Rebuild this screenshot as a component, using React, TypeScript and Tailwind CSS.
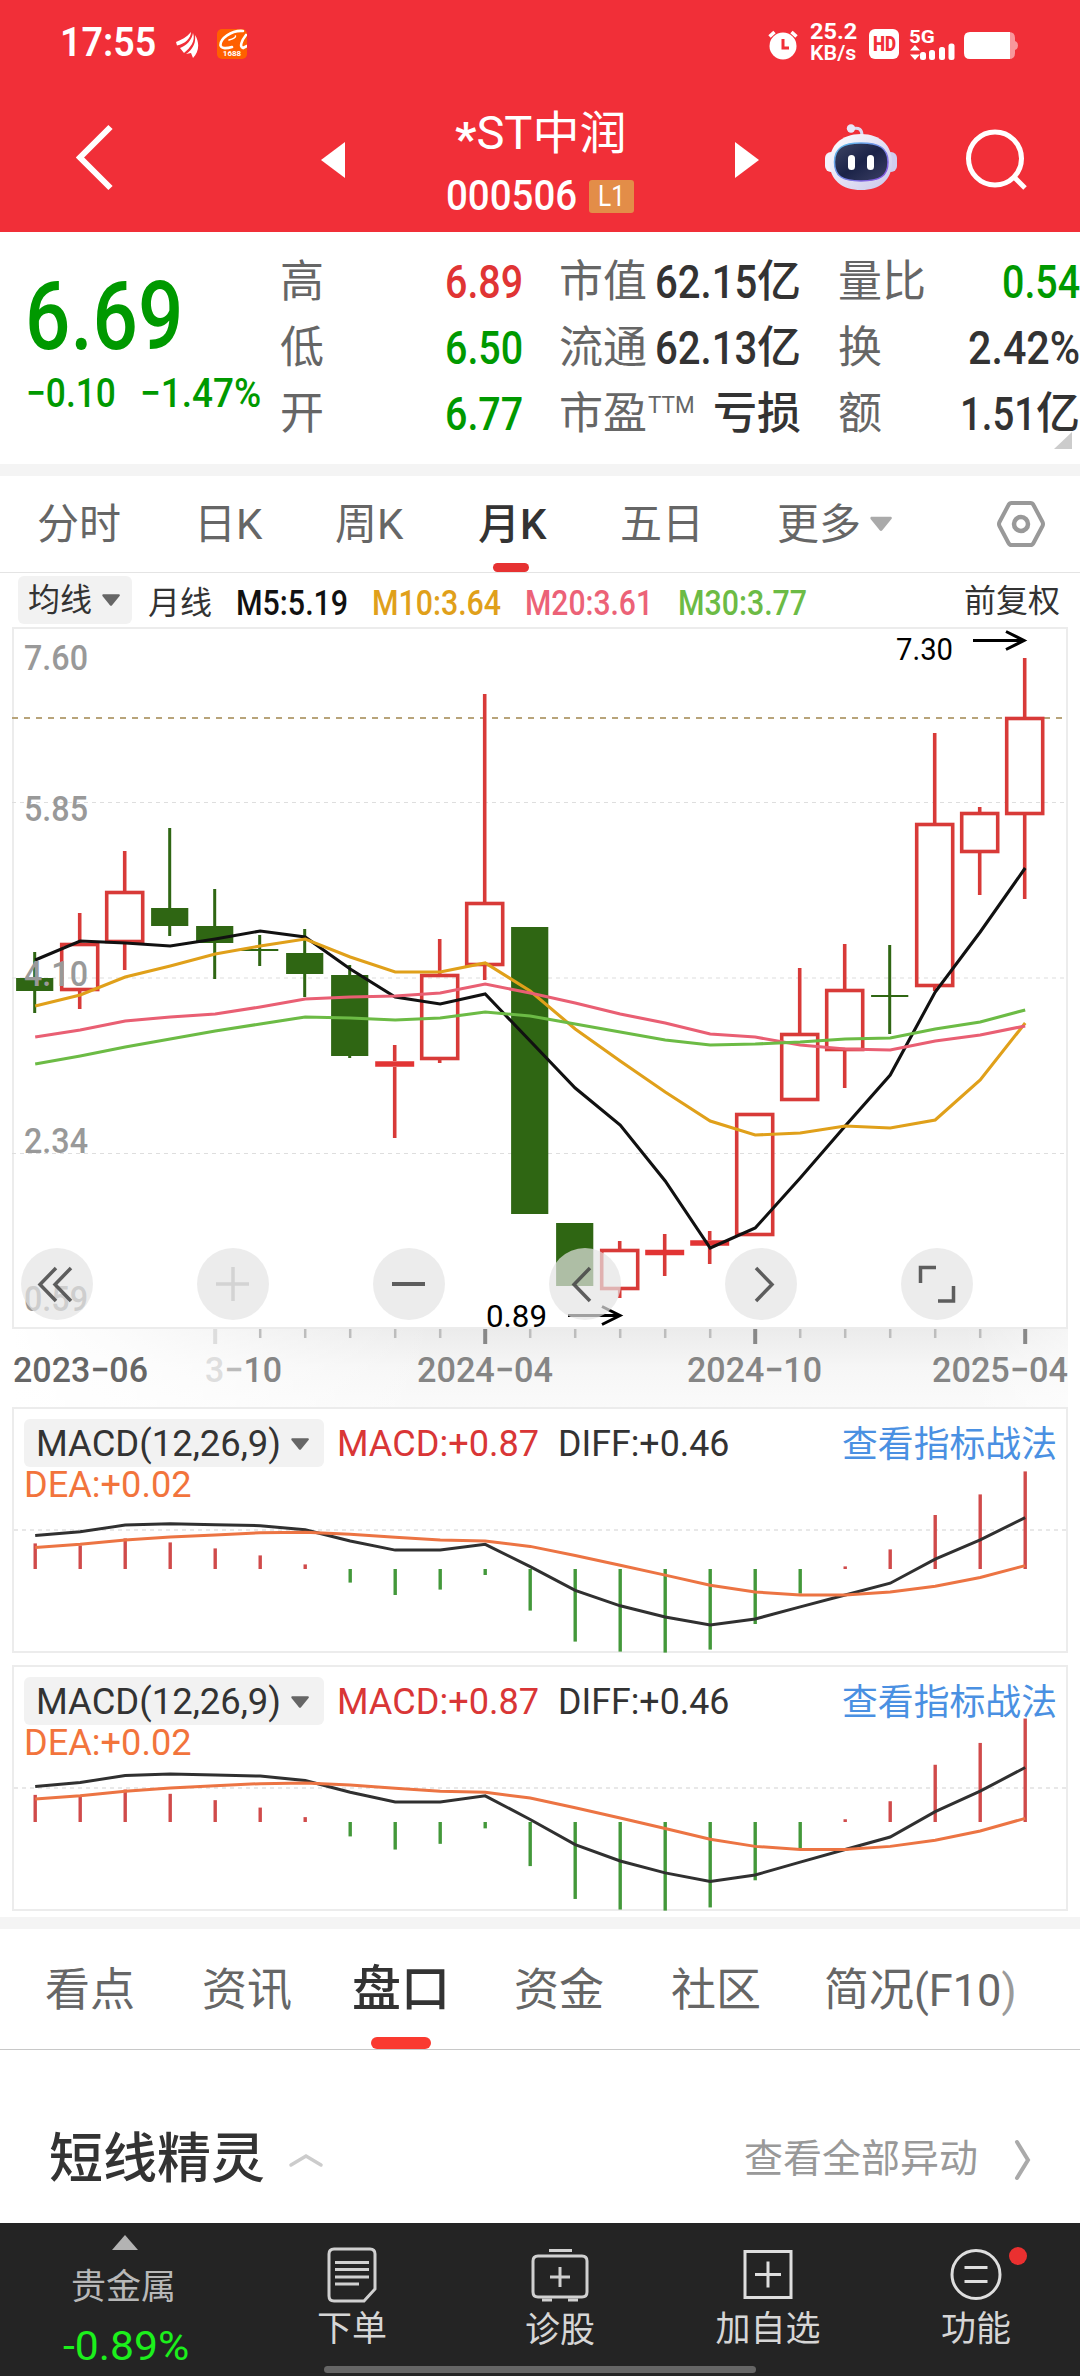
import { useLayoutEffect, useRef, useState, type ReactNode } from "react";

const CHART_X = 34.7;
const STEP = 45;

const px = (i: number) => CHART_X + i * STEP;

// up/down, high, body top, body bottom, low (chart pixels)
const candles: [string, number, number, number, number][] = [
  ["down", 952, 978, 991, 1013],
  ["up", 913, 943, 991, 1009],
  ["up", 851, 891, 943, 970],
  ["down", 828, 908, 926, 936],
  ["down", 889, 926, 943, 979],
  ["down", 935, 949, 951, 966],
  ["down", 929, 953, 974, 997],
  ["down", 965, 975, 1056, 1058],
  ["up", 1045, 1061, 1067, 1138],
  ["up", 939, 974, 1060, 1063],
  ["up", 694, 902, 966, 980],
  ["down", 927, 927, 1214, 1214],
  ["down", 1223, 1223, 1286, 1286],
  ["up", 1241, 1249, 1290, 1298],
  ["up", 1234, 1250, 1255, 1276],
  ["up", 1231, 1240, 1246, 1264],
  ["up", 1113, 1113, 1236, 1236],
  ["up", 968, 1033, 1101, 1101],
  ["up", 944, 989, 1051, 1088],
  ["down", 945, 995, 997, 1034],
  ["up", 733, 823, 987, 991],
  ["up", 807, 812, 853, 895],
  ["up", 658, 717, 815, 899],
];

const averages = [
  {
    color: "#111111",
    ys: [960, 941, 943, 946, 939, 931, 937, 969, 997, 1004, 994, 1041, 1088, 1125, 1181, 1248, 1228, 1178, 1126, 1075, 992, 932, 868],
  },
  {
    color: "#e0a01a",
    ys: [1006, 995, 977, 966, 954, 946, 939, 957, 972, 972, 963, 991, 1029, 1061, 1092, 1121, 1135, 1133, 1126, 1128, 1120, 1080, 1023],
  },
  {
    color: "#e95f73",
    ys: [1037, 1030, 1021, 1017, 1014, 1007, 999, 997, 996, 993, 984, 993, 1003, 1014, 1023, 1034, 1037, 1045, 1049, 1050, 1041, 1035, 1026],
  },
  {
    color: "#6cbb45",
    ys: [1064, 1056, 1047, 1039, 1031, 1024, 1017, 1018, 1020, 1018, 1012, 1016, 1024, 1032, 1040, 1045, 1044, 1042, 1039, 1038, 1029, 1022, 1010],
  },
];

const hist = [25.6, 23.6, 30.6, 26.6, 20.6, 13.6, 4.6, -13.6, -26, -20.6, -6, -41.6, -72.6, -82.6, -83.6, -80.6, -55, -24.6, 2.6, 19.6, 54, 74.6, 97.6];
const diff = [33.5, 37.2, 43.9, 45.3, 44.3, 43.3, 39.2, 28, 18.9, 18.9, 24.7, 2.4, -21.3, -36.8, -48, -56.1, -50, -37.9, -26, -14.2, 9.8, 29.1, 51.4];
const dea = [21.6, 24.7, 29.1, 32.1, 34.1, 36.2, 36.8, 34.8, 31.8, 29.1, 28.1, 22.6, 13.5, 3.7, -6.1, -16.2, -23, -26, -26, -23, -17.2, -8.5, 3.4];

const priceLabels = [
  { text: "7.60", y: 670 },
  { text: "5.85", y: 820.5 },
  { text: "4.10", y: 986 },
  { text: "2.34", y: 1153 },
  { text: "0.59", y: 1311 },
];

const periodTabs = [
  { label: "分时", pos: "ml-[37px] w-[84px]" },
  { label: "日K", pos: "ml-[73px] w-[70px]" },
  { label: "周K", pos: "ml-[71px] w-[70px]" },
  { label: "月K", pos: "ml-[73px] w-[70px]", active: true },
  { label: "五日", pos: "ml-[72px] w-[84px]" },
  { label: "更多", pos: "ml-[73px] w-[84px]" },
];

const infoTabs = [
  { label: "看点", pos: "ml-[45px] w-[90px]" },
  { label: "资讯", pos: "ml-[67px] w-[90px]" },
  { label: "盘口", pos: "ml-[60px] w-[98px]", active: true },
  { label: "资金", pos: "ml-[64px] w-[90px]" },
  { label: "社区", pos: "ml-[67px] w-[90px]" },
];

// Squeezes one line of text into the width of its box.
const Fit = ({ className, children }: { className: string; children: ReactNode }) => {
  const box = useRef<HTMLDivElement>(null);
  const inner = useRef<HTMLSpanElement>(null);
  const [scale, setScale] = useState(1);

  useLayoutEffect(() => {
    if (box.current && inner.current) {
      setScale(box.current.clientWidth / inner.current.offsetWidth);
    }
  }, []);

  return (
    <div ref={box} className={`shrink-0 whitespace-nowrap leading-none ${className}`}>
      <span ref={inner} className="inline-block origin-left" style={{ transform: `scaleX(${scale})` }}>
        {children}
      </span>
    </div>
  );
};

const Caret = ({ className }: { className: string }) => (
  <svg className={className} viewBox="0 0 20 13">
    <path d="M1 0h18q1.500 .6.500 2l-8.300 10.200q-1.200 1.200-2.400 0L.5 2Q0 .6 1 0z" fill="currentColor" />
  </svg>
);

const StatusBar = () => (
  <div className="flex h-[88px] text-white">
    <Fit className="mt-[23px] ml-[60px] w-[96px] text-[40px] font-semibold">17:55</Fit>
    <svg className="mt-[32px] ml-[20px] h-[26px] w-[23px]" viewBox="0 0 23 26" fill="#fff">
      <path d="M0 10C5 8 11 5 15 0C15 6 9 12 1 13.500z" />
      <path d="M4 16C10 14 16 8 17 1C20 9 14 16 8 21z" />
      <path d="M10 22C17 17 20 11 19 3C24 11 23 20 17 26L15 21z" />
    </svg>
    <div className="mt-[29px] ml-[18px] flex h-[30px] w-[30px] flex-col items-center overflow-hidden rounded-[5px] bg-[#ff6000]">
      <svg className="h-[21px] w-[30px]" viewBox="0 0 30 21" fill="none" stroke="#fff" strokeWidth="2.600" strokeLinecap="round">
        <path d="M26 2C14 1 3 10 3.500 16.500C4.500 20 10 19.500 15 18" />
        <path d="M12 11C16 10 19 8.500 18.500 7" strokeWidth="1.500" />
        <path d="M29 6C25 11 22 18 26 19L30 17" />
      </svg>
      <span className="text-[8px] leading-[8px] font-bold">1688</span>
    </div>
    <svg className="mt-[29px] ml-[521px] h-[31px] w-[30px]" viewBox="0 0 30 31">
      <circle cx="15" cy="17" r="13.500" fill="#fff" />
      <path d="M1.500 7.500l5-4.500M28.500 7.500l-5-4.500" stroke="#fff" strokeWidth="3.500" />
      <path d="M15 10v9h6" fill="none" stroke="#f12f38" strokeWidth="3" />
    </svg>
    <div className="mt-[21px] ml-[12px]">
      <Fit className="w-[47px] text-[22px] font-bold">25.2</Fit>
      <Fit className="w-[46px] text-[20px] font-semibold">KB/s</Fit>
    </div>
    <div className="mt-[29px] ml-[12px] flex h-[30px] w-[30px] items-center justify-center rounded-[6px] bg-white">
      <Fit className="w-[23px] text-[20px] font-black text-[#f12f38]">HD</Fit>
    </div>
    <div className="mt-[27px] ml-[10px] h-[34px] w-[48px]">
      <Fit className="w-[26px] text-[19px] font-bold">5G</Fit>
      <svg className="-mt-[3px] h-[18px] w-[48px]" viewBox="0 14 48 18" fill="#fff">
        <path d="M6 16l5 5.500H1zM6 31l5-5.500H1z" />
        <rect x="11" y="23" width="6" height="8" rx="2.500" />
        <rect x="20" y="21" width="6" height="10" rx="2.500" />
        <rect x="30" y="18" width="6" height="13" rx="2.500" />
        <rect x="39.500" y="14.500" width="6" height="16.500" rx="2.500" />
      </svg>
    </div>
    <svg className="mt-[32px] ml-[7px] h-[27px] w-[55px]" viewBox="0 0 55 27">
      <path d="M45 0q6 0 6 6v3q3 1 3 4.500T51 18v3q0 6-6 6z" fill="#fff" opacity=".5" />
      <path d="M6 0h40v27H6q-6 0-6-6V6q0-6 6-6z" fill="#fff" />
    </svg>
  </div>
);

const Robot = () => (
  <svg className="mt-[36px] ml-[66px] h-[67px] w-[72px]" viewBox="0 0 72 67">
    <defs>
      <linearGradient id="shell" x1="0" y1="0" x2="1" y2="1">
        <stop offset="0" stopColor="#ffffff" />
        <stop offset="1" stopColor="#c9c6ea" />
      </linearGradient>
      <linearGradient id="rim" x1="0" y1="0" x2="1" y2="1">
        <stop offset="0" stopColor="#5fc4ee" />
        <stop offset="1" stopColor="#8a4be0" />
      </linearGradient>
      <linearGradient id="visor" x1="0" y1="0" x2="1" y2="1">
        <stop offset="0" stopColor="#3f4564" />
        <stop offset=".5" stopColor="#1b2348" />
        <stop offset="1" stopColor="#3c4064" />
      </linearGradient>
    </defs>
    <path d="M28 4.500q9-2 9 7" fill="none" stroke="#dcdaf2" strokeWidth="3" />
    <circle cx="26" cy="4.500" r="4.200" fill="#e8e6f8" />
    <rect x="0" y="28" width="12" height="20" rx="6" fill="#f4f3fc" />
    <rect x="60" y="28" width="12" height="20" rx="6" fill="#d0cdee" />
    <path d="M36 10C56 10 67 22 67 38C67 56 55 66 36 66C17 66 4.500 56 4.500 38C4.500 22 16 10 36 10z" fill="url(#shell)" />
    <path d="M36 19C54 19 63 24 63 38C63 52 55 57 36 57C17 57 9.500 52 9.500 38C9.500 24 18 19 36 19z" fill="url(#visor)" stroke="url(#rim)" strokeWidth="1.500" />
    <rect x="23" y="31" width="7" height="15" rx="3.500" fill="#fff" />
    <rect x="42" y="31" width="7" height="15" rx="3.500" fill="#fff" />
  </svg>
);

const Header = () => (
  <header className="h-[232px] bg-[#f12f38]">
    <StatusBar />
    <div className="flex text-white">
      <svg className="mt-[36px] ml-[76px] h-[68px] w-[38px]" viewBox="0 0 38 68" fill="none" stroke="#fff" strokeWidth="6">
        <path d="M34.500 3L4 33.500L34.500 64" />
      </svg>
      <svg className="mt-[54px] ml-[207px] h-[36px] w-[24px]" viewBox="0 0 24 36" fill="#fff">
        <path d="M24 0v36L0 18z" />
      </svg>
      <div className="ml-[101px] w-[188px]">
        <Fit className="mt-[22px] ml-[9px] w-[172px] text-[46px]">
          <span className="relative top-[6px] font-bold">*</span>ST中润
        </Fit>
        <div className="mt-[19px] flex items-center">
          <Fit className="w-[131px] text-[42px] font-medium">000506</Fit>
          <div className="ml-[12px] flex h-[33px] w-[45px] items-center justify-center rounded-[3px] bg-[#e38d48]">
            <Fit className="w-[27px] text-[29px]">L1</Fit>
          </div>
        </div>
      </div>
      <svg className="mt-[54px] ml-[101px] h-[36px] w-[24px]" viewBox="0 0 24 36" fill="#fff">
        <path d="M0 0v36l24-18z" />
      </svg>
      <Robot />
      <svg className="mt-[41px] ml-[68px] h-[62px] w-[62px]" viewBox="0 0 62 62" fill="none" stroke="#fff" strokeWidth="5">
        <circle cx="30" cy="29.500" r="26.500" />
        <path d="M48 47l12 12" />
      </svg>
    </div>
  </header>
);

const Quote = () => (
  <section className="flex h-[232px] overflow-hidden text-[44px] whitespace-nowrap text-[#666]">
    <div className="w-[280px] shrink-0 text-[#009900]">
      <Fit className="mt-[38px] ml-[25px] w-[158px] text-[94px] font-medium">6.69</Fit>
      <div className="mt-[10px] flex text-[40px]">
        <Fit className="ml-[26px] w-[90px] font-medium">−0.10</Fit>
        <Fit className="ml-[24px] w-[121px] font-medium">−1.47%</Fit>
      </div>
    </div>

    <div className="mt-[17px] w-[243px] shrink-0">
      <div className="flex h-[66px] items-center justify-between">
        高<Fit className="w-[78px] text-[46px] font-medium text-[#e03434]">6.89</Fit>
      </div>
      <div className="flex h-[66px] items-center justify-between">
        低<Fit className="w-[78px] text-[46px] font-medium text-[#009900]">6.50</Fit>
      </div>
      <div className="flex h-[66px] items-center justify-between">
        开<Fit className="w-[78px] text-[46px] font-medium text-[#009900]">6.77</Fit>
      </div>
    </div>

    <div className="mt-[17px] ml-[36px] w-[242px] shrink-0">
      {["市值", "流通"].map((label, i) => (
        <div key={label} className="flex h-[66px] items-center justify-between">
          {label}
          <div className="flex items-center font-medium text-[#333]">
            <Fit className="w-[102px] text-[46px]">{i === 0 ? "62.15" : "62.13"}</Fit>
            <span>亿</span>
          </div>
        </div>
      ))}
      <div className="flex h-[66px] items-center">
        市盈
        <Fit className="-mt-[17px] ml-[1px] w-[47px] text-[23px]">TTM</Fit>
        <span className="ml-[18px] font-medium text-[#333]">亏损</span>
      </div>
    </div>

    <div className="relative mt-[17px] ml-[37px] w-[242px] shrink-0">
      <div className="flex h-[66px] items-center justify-between">
        量比<Fit className="w-[78px] text-[46px] font-medium text-[#009900]">0.54</Fit>
      </div>
      <div className="flex h-[66px] items-center justify-between">
        换<Fit className="w-[112px] text-[46px] font-medium text-[#333]">2.42%</Fit>
      </div>
      <div className="flex h-[66px] items-center justify-between">
        额
        <div className="flex items-center font-medium text-[#333]">
          <Fit className="w-[76px] text-[46px]">1.51</Fit>
          <span>亿</span>
        </div>
      </div>
      <svg className="absolute top-[183px] right-[8px] h-[17px] w-[18px]" viewBox="0 0 18 17">
        <path d="M18 0v17H0z" fill="#ccc" />
      </svg>
    </div>
  </section>
);

const PeriodTabs = () => (
  <nav className="flex h-[97px] items-center border-b border-[#e4e4e4] text-[42px] text-[#666]">
    {periodTabs.map((tab) => (
      <div key={tab.label} className={`relative flex h-full items-center whitespace-nowrap ${tab.pos}`}>
        <span className={tab.active ? "font-medium text-[#333]" : ""}>{tab.label}</span>
        {tab.active && <span className="absolute bottom-0 left-[15px] h-[9px] w-[36px] rounded-full bg-[#e63232]" />}
      </div>
    ))}
    <Caret className="ml-[9px] h-[18px] w-[22px] text-[#aaa]" />
    <svg className="ml-[104px] h-[48px] w-[50px]" viewBox="0 0 50 48" fill="none" stroke="#999" strokeWidth="4">
      <path d="M15.500 3h19q2 0 3 2l9 17q1 2 0 4l-9 17q-1 2-3 2h-19q-2 0-3-2l-9-17q-1-2 0-4l9-17q1-2 3-2z" />
      <circle cx="25" cy="24" r="7" strokeWidth="4.500" />
    </svg>
  </nav>
);

const Legend = () => (
  <div className="flex h-[54px] items-start pt-[3px] text-[32px] text-[#333]">
    <div className="ml-[18px] flex h-[48px] w-[114px] items-center rounded-[6px] bg-[#f2f2f2] pl-[10px]">
      均线
      <Caret className="ml-[10px] h-[12px] w-[18px] text-[#666]" />
    </div>
    <div className="ml-[16px] flex h-[54px] items-center">月线</div>
    <div className="flex h-[55px] items-center text-[35px] font-medium">
      <Fit className="ml-[24px] w-[112px] text-[#111]">M5:5.19</Fit>
      <Fit className="ml-[24px] w-[129px] text-[#e0a01a]">M10:3.64</Fit>
      <Fit className="ml-[24px] w-[128px] text-[#ec6277]">M20:3.61</Fit>
      <Fit className="ml-[25px] w-[129px] text-[#6cbb45]">M30:3.77</Fit>
    </div>
    <div className="ml-[157px] flex h-[49px] items-center">前复权</div>
  </div>
);

const toolIcons = [
  <path key="first" d="M35 20L19 36.500L35 53M50 20L34 36.500L50 53" />,
  <path key="plus" d="M19 36h33M36 19v34" stroke="#cfcfcf" />,
  <path key="minus" d="M19 36h33" strokeWidth="4" />,
  <path key="prev" d="M41 20L25 36.500L41 53" />,
  <path key="next" d="M31 20L47 36.500L31 53" />,
  <path key="full" d="M19.500 35V19.500H35M37 53h15.500V38" />,
];

const KLine = () => (
  <section className="relative h-[780px]">
    <svg className="block h-[780px] w-[1080px]" viewBox="0 627 1080 780" fill="none">
      <defs>
        <linearGradient id="axisV" x1="0" y1="0" x2="0" y2="1">
          <stop offset="0" stopColor="#ebebeb" />
          <stop offset=".5" stopColor="#f6f6f6" />
          <stop offset="1" stopColor="#fafafa" />
        </linearGradient>
        <linearGradient id="axisH" x1="0" y1="0" x2="1" y2="0">
          <stop offset="0" stopColor="#fff" />
          <stop offset=".1" stopColor="#fff" stopOpacity=".8" />
          <stop offset=".4" stopColor="#fff" stopOpacity="0" />
          <stop offset=".9" stopColor="#fff" stopOpacity="0" />
          <stop offset="1" stopColor="#fff" stopOpacity=".5" />
        </linearGradient>
      </defs>
      <rect x="12" y="1328" width="1056" height="79" fill="url(#axisV)" />
      <rect x="12" y="1328" width="1056" height="79" fill="url(#axisH)" />
      <rect x="13" y="628" width="1054" height="700" stroke="#ececec" strokeWidth="2" />

      {[802.5, 978, 1153.5].map((y) => (
        <path key={y} d={`M12 ${y}H1066`} stroke="#dedede" strokeWidth="1.200" strokeDasharray="4 4" />
      ))}
      <path d="M12 718H1066" stroke="#b8a47a" strokeWidth="2" strokeDasharray="6 6" />

      {candles.map(([dir, high, top, bottom, low], i) =>
        dir === "up" ? (
          <g key={i} stroke="#d83a38" strokeWidth="3.600">
            <path d={`M${px(i)} ${high}V${top}M${px(i)} ${bottom}V${low}`} />
            {bottom - top < 8 ? (
              <path d={`M${px(i) - 19.5} ${(top + bottom) / 2}h39`} stroke="#e23434" strokeWidth="5.500" />
            ) : (
              <rect x={px(i) - 18} y={top + 1.5} width="36" height={bottom - top - 3} />
            )}
          </g>
        ) : (
          <g key={i} fill="#2f6613">
            <rect x={px(i) - 1.5} y={high} width="3" height={low - high} />
            <rect x={px(i) - 18.6} y={top} width="37.200" height={bottom - top} />
          </g>
        )
      )}

      {averages.map((line) => (
        <polyline key={line.color} points={line.ys.map((y, i) => `${px(i) + 0.5},${y}`).join(" ")} stroke={line.color} strokeWidth="3.100" />
      ))}

      <g fill="#999" fontSize="35.500" fontWeight="500">
        {priceLabels.map((label) => (
          <text key={label.text} x="24" y={label.y} textLength="64" lengthAdjust="spacingAndGlyphs">
            {label.text}
          </text>
        ))}
      </g>

      <g fill="#000" fontSize="32">
        <text x="896" y="659.500" textLength="57" lengthAdjust="spacingAndGlyphs">7.30</text>
        <text x="486" y="1326.500" textLength="61" lengthAdjust="spacingAndGlyphs">0.89</text>
      </g>
      <g stroke="#000" strokeWidth="3">
        <path d="M973 640.500h50M1006 631.500l18 9l-18 9" />
        <path d="M568 1315.500h50M602 1306.500l18 9l-18 9" />
      </g>

      {candles.slice(4).map((_, n) => {
        const i = n + 4;
        const major = (i - 4) % 6 === 0;
        const color = i === 4 ? "#ddd" : major ? "#888" : "#bdbdbd";
        return <path key={i} d={`M${px(i) + 0.5} 1329V${major ? 1344 : 1338}`} stroke={color} strokeWidth={major ? 4 : 2.5} />;
      })}

      <g fill="#858585" fontSize="35.500" fontWeight="500">
        <text x="13" y="1382" fill="#666" textLength="135" lengthAdjust="spacingAndGlyphs">2023−06</text>
        <text x="205" y="1382" textLength="77" lengthAdjust="spacingAndGlyphs">
          <tspan fill="#dedede">3</tspan>
          <tspan fill="#bbb">−</tspan>10
        </text>
        <text x="417" y="1382" textLength="136" lengthAdjust="spacingAndGlyphs">2024−04</text>
        <text x="687" y="1382" textLength="135" lengthAdjust="spacingAndGlyphs">2024−10</text>
        <text x="932" y="1382" textLength="136" lengthAdjust="spacingAndGlyphs">2025−04</text>
      </g>
    </svg>

    <div className="absolute top-[621px] left-[21px] flex gap-[104px]">
      {toolIcons.map((icon) => (
        <div key={icon.key} className="h-[72px] w-[72px] rounded-full bg-[#e4e4e4]/70">
          <svg className="h-[72px] w-[72px]" viewBox="0 0 72 72" fill="none" stroke="#444" strokeOpacity=".85" strokeWidth="3.500">
            {icon}
          </svg>
        </div>
      ))}
    </div>
  </section>
);

const Macd = ({ base, zoom }: { base: number; zoom: number }) => {
  const points = (values: number[]) => values.map((v, i) => `${px(i) + 0.5 - 14},${base - v * zoom}`).join(" ");

  return (
    <section className="relative mx-[12px] h-[246px] border-2 border-[#ececec]">
      <svg className="absolute inset-0 h-[244px] w-[1052px]" viewBox="0 0 1052 244" fill="none">
        <path d="M0 121H1052" stroke="#e8e8e8" strokeWidth="2" strokeDasharray="4 4" />
        {hist.map((v, i) => (
          <path key={i} d={`M${px(i) - 13.5} ${base}V${base - v * zoom}`} stroke={v > 0 ? "#d04a4a" : "#43983a"} strokeWidth="3.400" />
        ))}
        <polyline points={points(diff)} stroke="#303030" strokeWidth="3" />
        <polyline points={points(dea)} stroke="#ec7443" strokeWidth="3" />
      </svg>
      <div className="relative flex items-center pt-[10px] text-[37px]">
        <div className="ml-[10px] flex h-[48px] w-[300px] items-center rounded-[6px] bg-[#f2f2f2] pt-[1px] text-[#333]">
          <Fit className="ml-[12px] w-[245px]">MACD(12,26,9)</Fit>
          <Caret className="ml-[10px] h-[12px] w-[18px] text-[#666]" />
        </div>
        <Fit className="ml-[13px] w-[202px] text-[#d93636]">MACD:+0.87</Fit>
        <Fit className="ml-[19px] w-[171px] text-[#333]">DIFF:+0.46</Fit>
        <Fit className="mt-[3px] ml-[113px] w-[215px] text-[36px] text-[#4a90e2]">查看指标战法</Fit>
      </div>
      <Fit className="relative -mt-[1px] ml-[10px] w-[168px] text-[37px] text-[#f2743c]">DEA:+0.02</Fit>
    </section>
  );
};

const InfoTabs = () => (
  <nav className="flex h-[121px] items-center border-b border-[#c8c8c8] text-[45px] text-[#666]">
    {infoTabs.map((tab) => (
      <div key={tab.label} className={`relative flex h-full items-center whitespace-nowrap ${tab.pos}`}>
        <span className={tab.active ? "pt-[2px] text-[49px] font-medium text-[#333]" : "pt-[3px]"}>{tab.label}</span>
        {tab.active && <span className="absolute bottom-0 left-[19px] h-[12px] w-[60px] rounded-full bg-[#fa3a30]" />}
      </div>
    ))}
    <div className="ml-[63px] flex items-center pt-[3px]">
      简况
      <Fit className="w-[103px] text-[45px]">
        (F10<span className="text-[#9a9a9a]">)</span>
      </Fit>
    </div>
  </nav>
);

const ShortTerm = () => (
  <section className="flex h-[173px] items-center pt-[46px]">
    <h2 className="ml-[49px] w-[216px] text-[54px] leading-none font-medium text-[#333]">短线精灵</h2>
    <svg className="ml-[22px] h-[16px] w-[38px]" viewBox="0 0 38 16" fill="none" stroke="#ccc" strokeWidth="3.500" strokeLinecap="round">
      <path d="M4 13L19 4L34 13" />
    </svg>
    <span className="ml-[419px] w-[234px] text-[39px] leading-none whitespace-nowrap text-[#999]">查看全部异动</span>
    <svg className="ml-[34px] h-[44px] w-[20px]" viewBox="0 0 20 44" fill="none" stroke="#aaa" strokeWidth="4" strokeLinecap="round">
      <path d="M5 4L16 22L5 40" />
    </svg>
  </section>
);

const BottomBar = () => (
  <footer className="relative flex h-[153px] bg-[#242424] text-[35px] leading-none text-[#d6d6d6]">
    <div className="flex w-[248px] flex-col pl-[63px]">
      <svg className="mt-[12px] ml-[49px] h-[15px] w-[26px]" viewBox="0 0 26 15">
        <path d="M13 0l13 15H0z" fill="#b3b3b3" />
      </svg>
      <span className="mt-[20px] ml-[8px] text-[#b8b8b8]">贵金属</span>
      <Fit className="mt-[21px] w-[126px] text-[41px] text-[#1cf01c]">-0.89%</Fit>
    </div>
    <div className="flex w-[208px] flex-col items-center">
      <svg className="mt-[23px] h-[58px] w-[50px]" viewBox="0 0 50 58" fill="none" stroke="#d0d0d0" strokeWidth="3">
        <path d="M7 3h36q5 0 5 5v35L37 55H7q-5 0-5-5V8q0-5 5-5z" />
        <path d="M8 16.500h34M8 23.500h34M8 31h34M8 38h24" />
      </svg>
      <span className="mt-[8px]">下单</span>
    </div>
    <div className="flex w-[208px] flex-col items-center">
      <svg className="mt-[23px] h-[58px] w-[60px]" viewBox="0 0 60 58" fill="none" stroke="#d0d0d0" strokeWidth="3">
        <path d="M19 4.500h23" />
        <path d="M8 10h44q5 0 5 5v31q0 5-5 5H8q-5 0-5-5V15q0-5 5-5z" />
        <path d="M12 54h10M38 54h10M20 31h20M30 21v20" />
      </svg>
      <span className="mt-[9px]">诊股</span>
    </div>
    <div className="flex w-[208px] flex-col items-center">
      <svg className="mt-[23px] h-[58px] w-[52px]" viewBox="0 0 52 58" fill="none" stroke="#dedede" strokeWidth="3">
        <path d="M3 5.500h46v46H3zM13 28.500h26M26 15.500v26" />
      </svg>
      <span className="mt-[8px]">加自选</span>
    </div>
    <div className="relative flex w-[208px] flex-col items-center">
      <svg className="mt-[23px] h-[58px] w-[54px]" viewBox="0 0 54 58" fill="none" stroke="#dedede" strokeWidth="3">
        <circle cx="27" cy="28.500" r="24" />
        <path d="M15.500 21.500h23M15.500 35.500h23" />
      </svg>
      <span className="mt-[8px]">功能</span>
      <span className="absolute top-[24px] left-[137px] h-[18px] w-[18px] rounded-full bg-[#ea3030]" />
    </div>
    <div className="absolute bottom-[3px] left-[324px] h-[7px] w-[432px] rounded-full bg-[#666]" />
  </footer>
);

export default function App() {
  return (
    <div className="w-[1080px] overflow-hidden bg-white font-['Roboto','Noto_Sans_CJK_SC',sans-serif]">
      <Header />
      <Quote />
      <div className="h-[12px] bg-[#f4f4f4]" />
      <PeriodTabs />
      <Legend />
      <KLine />
      <Macd base={160} zoom={1} />
      <div className="h-[12px]" />
      <Macd base={155} zoom={1.06} />
      <div className="h-[6px]" />
      <div className="h-[12px] bg-[#f4f4f4]" />
      <InfoTabs />
      <ShortTerm />
      <BottomBar />
    </div>
  );
}
